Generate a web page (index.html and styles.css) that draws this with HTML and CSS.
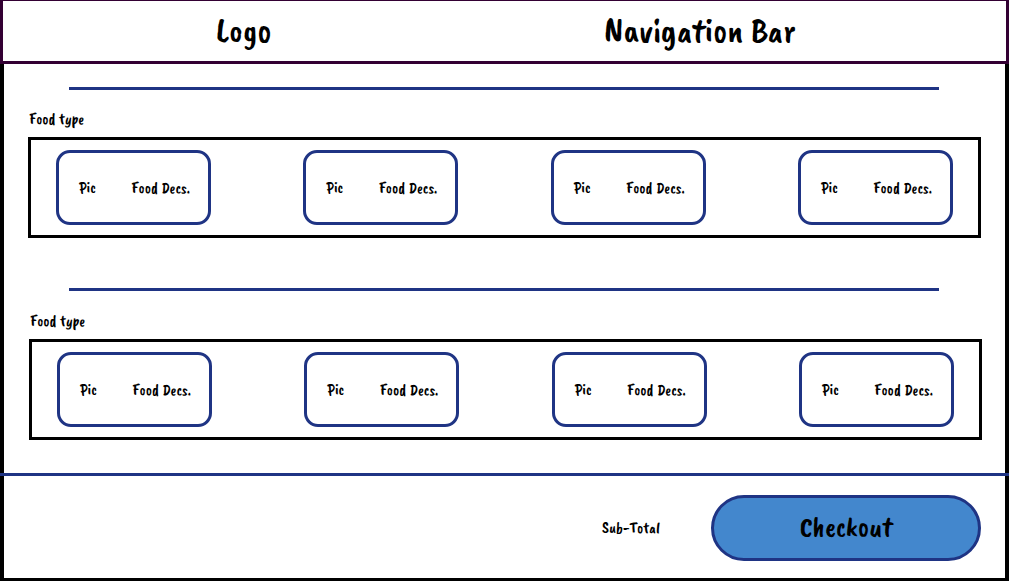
FILE: index.html
```html
<!DOCTYPE html>
<html lang="en">
<head>
<meta charset="utf-8">
<title>Food menu</title>
<link rel="stylesheet" href="styles.css">
</head>
<body>
<div class="page">
  <header class="header">
    <div class="logo">Logo</div>
    <nav class="nav">Navigation Bar</nav>
  </header>
  <main class="menu">
    <section class="group">
      <hr class="rule">
      <h2 class="group-title">Food type</h2>
      <ul class="cards">
        <li class="card"><span>Pic</span><span>Food Decs.</span></li>
        <li class="card"><span>Pic</span><span>Food Decs.</span></li>
        <li class="card"><span>Pic</span><span>Food Decs.</span></li>
        <li class="card"><span>Pic</span><span>Food Decs.</span></li>
      </ul>
    </section>
    <section class="group group-second">
      <hr class="rule">
      <h2 class="group-title">Food type</h2>
      <ul class="cards">
        <li class="card"><span>Pic</span><span>Food Decs.</span></li>
        <li class="card"><span>Pic</span><span>Food Decs.</span></li>
        <li class="card"><span>Pic</span><span>Food Decs.</span></li>
        <li class="card"><span>Pic</span><span>Food Decs.</span></li>
      </ul>
    </section>
  </main>
  <footer class="footer">
    <div class="summary">
      <span class="subtotal">Sub-Total</span>
      <button class="checkout" type="button">Checkout</button>
    </div>
  </footer>
</div>
</body>
</html>
```
FILE: styles.css
```css
* { box-sizing: border-box; }

body {
  margin: 0;
  background: #fff;
  color: #000;
  font-family: "Caveat Brush", "Liberation Sans Narrow", Lato, sans-serif;
  font-size: 16px;
  line-height: 20px;
}

.page { margin-right: 1px; }

.header {
  display: grid;
  grid-template-columns: 48% 43%;
  align-items: center;
  border: 3px solid #330033;
  border-top-width: 1px;
  padding: 9px 0 11px;
  font-size: 36px;
  line-height: 40px;
  text-align: center;
}

.menu {
  border: solid #000;
  border-width: 0 4px;
  padding: 23px 24px 33px;
}

.group-second {
  margin-top: 50px;
  padding-left: 1px;
  margin-right: -1px;
}

.rule {
  height: 3px;
  margin: 0 42px 0 41px;
  border: 0;
  background: #1f3484;
}

.group-second .rule { margin-left: 40px; margin-right: 43px; }

.group-title {
  margin: 19px 0 8px 1px;
  font-size: 16px;
  font-weight: 400;
  line-height: 20px;
}

.group-second .group-title { margin-top: 20px; }

.cards {
  display: flex;
  justify-content: space-between;
  margin: 0;
  border: 3px solid #000;
  padding: 10px 25px;
  list-style: none;
}

.card {
  display: flex;
  flex: 0 0 155px;
  align-items: center;
  justify-content: space-between;
  height: 75px;
  border: 3px solid #1f3484;
  border-radius: 14px;
  padding: 0 18px 0 20px;
}

.footer { border-top: 3px solid #1f3484; }

.summary {
  display: flex;
  align-items: center;
  justify-content: flex-end;
  gap: 51px;
  border: solid #000;
  border-width: 0 4px 3px;
  padding: 19px 24px 17px;
}

.checkout {
  width: 270px;
  height: 66px;
  border: 3px solid #1f3484;
  border-radius: 33px;
  padding: 0 0 2px;
  background: #4387cd;
  color: #000;
  font: 400 29px/36px "Caveat Brush", "Liberation Sans Narrow", Lato, sans-serif;
}
```
